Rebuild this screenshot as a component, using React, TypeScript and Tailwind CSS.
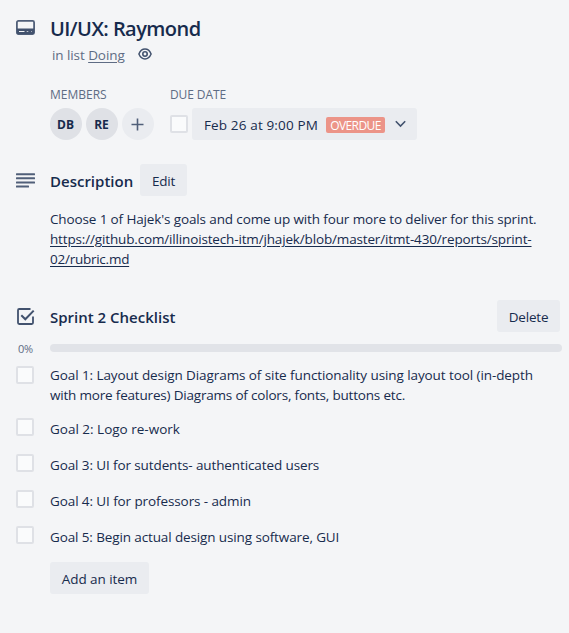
import React from "react";

const textFont = "font-['Open_Sans','Noto_Sans',sans-serif]";

function Checkbox({ className = "" }: { className?: string }) {
  return (
    <span
      role="checkbox"
      aria-checked="false"
      className={`block size-[18px] shrink-0 rounded-[2px] border-2 border-[#dfe1e6] bg-[#fafbfc] ${className}`}
    />
  );
}

function Button({ children, className = "" }: { children: React.ReactNode; className?: string }) {
  return (
    <button
      className={`flex h-8 shrink-0 items-center justify-center rounded-[3px] bg-[#eaecf0] pt-0.5 text-[13.5px] whitespace-nowrap ${className}`}
    >
      {children}
    </button>
  );
}

function CardIcon() {
  return (
    <svg width="19" height="15" viewBox="0 0 19 15" className="mt-5 block">
      <rect x=".9" y=".9" width="17.200" height="13.200" rx="1.500" fill="none" stroke="#505f79" strokeWidth="1.800" />
      <rect x="1" y="8.500" width="17" height="5.500" fill="#42526e" />
      <rect x="3" y="11" width="5.500" height="1" fill="#f4f5f7" />
      <rect x="10.700" y="11" width="1.600" height="1" fill="#c1c7d0" />
      <rect x="15" y="11" width="1" height="1" fill="#a5adba" />
    </svg>
  );
}

function EyeIcon() {
  return (
    <svg width="14" height="12" viewBox="0 0 14 12" fill="none" stroke="#42526e" className="block">
      <path d="M.9 6C2.300 2.700 4.400 1.100 7 1.100S11.700 2.700 13.100 6C11.700 9.300 9.600 10.900 7 10.900S2.300 9.300 .9 6Z" strokeWidth="1.500" />
      <circle cx="7" cy="6" r="2.200" strokeWidth="1.600" />
    </svg>
  );
}

function DescriptionIcon() {
  return (
    <svg width="19" height="15" viewBox="0 0 19 15" fill="#505f79" className="mt-[9px] block">
      <rect y=".2" width="19" height="2" rx=".5" />
      <rect y="4.300" width="19" height="2" rx=".5" />
      <rect y="8.400" width="19" height="2" rx=".5" />
      <rect y="12.500" width="13" height="2" rx=".5" />
    </svg>
  );
}

function ChecklistIcon() {
  return (
    <svg width="18" height="17" viewBox="0 0 18 17" fill="none" stroke="#42526e" className="mt-2 ml-px block">
      <path d="M13.500 1H2.200Q1 1 1 2.200V14.800Q1 16 2.200 16H14.800Q16 16 16 14.800V8.500" strokeWidth="1.800" />
      <path d="M4.300 7.300L8.300 11.300L16.700 2.600" strokeWidth="2" />
    </svg>
  );
}

function Member({ initials }: { initials: string }) {
  return (
    <span className="flex size-8 items-center justify-center rounded-full bg-[#dfe1e6] pt-px pr-px text-[12px] leading-8 font-bold">
      {initials}
    </span>
  );
}

const goals = [
  { text: "Goal 2: Logo re-work", tracking: "" },
  { text: "Goal 3: UI for sutdents- authenticated users", tracking: "tracking-[-0.11px]" },
  { text: "Goal 4: UI for professors - admin", tracking: "tracking-[-0.1px]" },
  { text: "Goal 5: Begin actual design using software, GUI", tracking: "tracking-[-0.12px]" },
];

export default function App() {
  return (
    <main className={`h-[633px] w-[569px] overflow-hidden bg-[#f4f5f7] pl-4 text-[13.5px] leading-5 text-[#172b4d] ${textFont}`}>
      <header className="flex h-[84px]">
        <div className="w-[34px] shrink-0">
          <CardIcon />
        </div>
        <div className="pt-[17px]">
          <h1 className="text-[20px] leading-6 font-semibold tracking-[-0.55px] whitespace-nowrap">UI/UX: Raymond</h1>
          <div className="mt-1 flex items-center pl-[2px] text-[#5e6c84]">
            <span className="w-[73px] tracking-[-0.08px] whitespace-nowrap">
              <span>in list </span>
              <span className="underline underline-offset-2">Doing</span>
            </span>
            <span className="-mt-0.5 ml-[13px]">
              <EyeIcon />
            </span>
          </div>
        </div>
      </header>

      <section className="flex h-20 pl-[34px]">
        <div className="w-[120px]">
          <h3 className="h-6 pt-px text-[12px] text-[#5e6c84]">MEMBERS</h3>
          <div className="flex gap-1">
            <Member initials="DB" />
            <Member initials="RE" />
            <span className="flex size-8 items-center justify-center rounded-full bg-[#eaecf0] pr-px">
              <svg width="13" height="13" viewBox="0 0 13 13" stroke="#505f79" strokeWidth="1.600">
                <path d="M6.500 .5V12.500M.5 6.500H12.500" />
              </svg>
            </span>
          </div>
        </div>
        <div>
          <h3 className="h-6 pt-px text-[12px] tracking-[-0.1px] text-[#5e6c84]">DUE DATE</h3>
          <div className="flex items-center">
            <Checkbox />
            <div className="ml-1 flex h-8 w-[225px] items-center rounded-[3px] bg-[#eaecf0] pl-3">
              <span className="w-[122px] pt-0.5 tracking-[0.14px] whitespace-nowrap">Feb 26 at 9:00 PM</span>
              <span className="mt-0.5 flex h-4 w-[59px] items-center justify-center rounded-[2px] bg-[#ec9488] pt-px text-[12px] text-white">
                <span className="tracking-[-0.6px]">OVERDUE</span>
              </span>
              <svg width="12" height="8" viewBox="0 0 12 8" fill="none" stroke="#42526e" strokeWidth="1.600" className="ml-[10px]">
                <path d="M.8 1.300L5.500 6L10.200 1.300" />
              </svg>
            </div>
          </div>
        </div>
      </section>

      <section className="flex h-[45px]">
        <div className="w-[34px] shrink-0">
          <DescriptionIcon />
        </div>
        <h2 className="w-[90px] pt-[7px] text-[15px] font-semibold whitespace-nowrap">Description</h2>
        <Button className="w-[47px] tracking-[-0.3px]">Edit</Button>
      </section>
      <div className="h-[91px] pl-[34px] whitespace-nowrap">
        <p className="tracking-[-0.13px]">Choose 1 of Hajek's goals and come up with four more to deliver for this sprint.</p>
        <a className="block underline underline-offset-2">
          <span className="tracking-[-0.155px]">https://github.com/illinoistech-itm/jhajek/blob/master/itmt-430/reports/sprint-</span>
          <br />
          <span className="tracking-[-0.25px]">02/rubric.md</span>
        </a>
      </div>

      <section className="flex h-11">
        <div className="w-[34px] shrink-0">
          <ChecklistIcon />
        </div>
        <h2 className="w-[447px] pt-[7px] text-[15px] font-semibold whitespace-nowrap">Sprint 2 Checklist</h2>
        <Button className="w-[63px] tracking-[-0.2px]">Delete</Button>
      </section>
      <div className="flex h-[21px]">
        <span className="w-[34px] pl-[2px] text-[11px] leading-[10px] tracking-[-0.3px] text-[#5e6c84]">0%</span>
        <span className="h-2 w-[512px] rounded-full bg-[#e1e3e8]" />
      </div>

      <ul className="whitespace-nowrap">
        <li className="flex h-[54px]">
          <Checkbox className="mt-px mr-4" />
          <p>
            <span className="tracking-[-0.085px]">Goal 1: Layout design Diagrams of site functionality using layout tool (in-depth</span>
            <br />
            <span className="tracking-[-0.19px]">with more features) Diagrams of colors, fonts, buttons etc.</span>
          </p>
        </li>
        {goals.map((goal) => (
          <li key={goal.text} className="flex h-9">
            <Checkbox className="-mt-px mr-4" />
            <p className={goal.tracking}>{goal.text}</p>
          </li>
        ))}
      </ul>
      <Button className="-mt-px ml-[34px] w-[99px] tracking-[-0.08px]">Add an item</Button>
    </main>
  );
}
